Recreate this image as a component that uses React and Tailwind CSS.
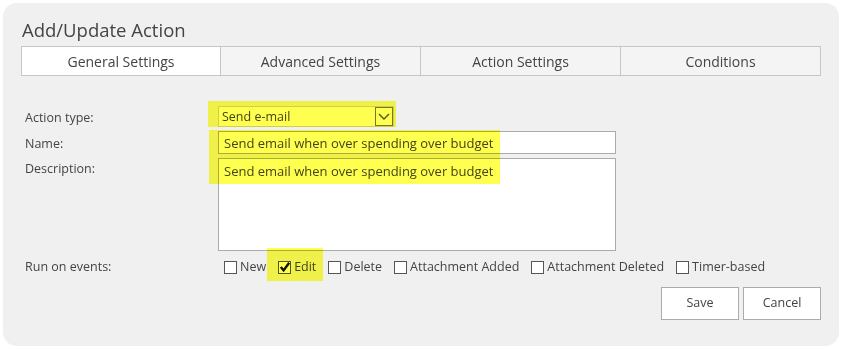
import React from "react";

const font = { fontFamily: '"Open Sans", "Noto Sans", Arial, sans-serif' };

function Box({ checked }) {
  return (
    <span className="relative inline-flex h-[13px] w-[13px] shrink-0 items-center justify-center border border-[#555] bg-white">
      {checked && (
        <svg width="12" height="12" viewBox="0 0 12 12" className="absolute left-[0px] top-[-1px]">
          <path d="M1.8 6 L4.6 9.4 L10.2 1.8" fill="none" stroke="#111" strokeWidth="2.4" />
        </svg>
      )}
    </span>
  );
}

function Check({ label, checked }) {
  return (
    <span className="inline-flex items-center gap-[3px]">
      <Box checked={checked} />
      <span>{label}</span>
    </span>
  );
}

export default function App() {
  const tabs = ["General Settings", "Advanced Settings", "Action Settings", "Conditions"];
  return (
    <div className="w-[843px] h-[349px] bg-white p-[3px] text-[#444]" style={font}>
      <div className="relative h-[343px] w-[836px] rounded-[14px] bg-[#f0f0f0] pl-[18px] pr-[15px] pt-[14px]">
        <div className="pl-[1px] text-[18.5px] leading-[26px] text-[#444]">Add/Update Action</div>
        <div className="mt-[3px] flex h-[30px] w-[800px]">
          {tabs.map((t, i) => (
            <div
              key={t}
              className={
                "flex w-[200px] items-center justify-center border border-[#c6c6c6] text-[14px] " +
                (i === 0 ? "bg-white" : "border-l-0 bg-[#f4f4f4]")
              }
            >
              {t}
            </div>
          ))}
        </div>

        <div className="mt-[30px] flex flex-col pl-[4px] text-[12.5px]">
          <div className="flex h-[21px] items-center">
            <div className="w-[193px] pt-[3px]">Action type:</div>
            <div className="flex h-[21px] w-[176px] items-center justify-between border border-[#d0d0d0] bg-white pl-[3px]">
              <span className="pt-[1px]">Send e-mail</span>
              <span className="flex h-[19px] w-[18px] items-center justify-center border border-[#777] bg-white">
                <svg width="12" height="8" viewBox="0 0 12 8">
                  <path d="M1 1 L6 6 L11 1" fill="none" stroke="#555" strokeWidth="1.4" />
                </svg>
              </span>
            </div>
          </div>
          <div className="mt-[4px] flex h-[23px] items-center">
            <div className="w-[193px] pt-[3px]">Name:</div>
            <div className="flex h-[23px] w-[398px] items-center border border-[#ababab] bg-white pl-[5px] pt-[2px] text-[13px]">
              Send email when over spending over budget
            </div>
          </div>
          <div className="mt-[4px] flex">
            <div className="w-[193px] pt-[2px]">Description:</div>
            <div className="h-[93px] w-[398px] border border-[#ababab] bg-white pl-[5px] pt-[3px] text-[13px]">
              Send email when over spending over budget
            </div>
          </div>
          <div className="mt-[7px] flex h-[18px] items-center">
            <div className="w-[199px]">Run on events:</div>
            <div className="flex items-center gap-[12px]">
              <Check label="New" />
              <Check label="Edit" checked />
              <Check label="Delete" />
              <Check label="Attachment Added" />
              <Check label="Attachment Deleted" />
              <Check label="Timer-based" />
            </div>
          </div>
          <div className="mt-[11px] flex justify-end gap-[4px] pr-[3px]">
            <button className="h-[33px] w-[78px] border border-[#ababab] bg-white text-[12.5px] text-[#444]">Save</button>
            <button className="h-[33px] w-[78px] border border-[#ababab] bg-white text-[12.5px] text-[#444]">Cancel</button>
          </div>
        </div>

        <div className="pointer-events-none absolute left-[205px] top-[98px] h-[26px] w-[188px] bg-[#ffff50] mix-blend-multiply" />
        <div className="pointer-events-none absolute left-[206px] top-[127px] h-[54px] w-[291px] bg-[#ffff50] mix-blend-multiply" />
        <div className="pointer-events-none absolute left-[264px] top-[245px] h-[33px] w-[56px] bg-[#ffff50] mix-blend-multiply" />
      </div>
    </div>
  );
}
